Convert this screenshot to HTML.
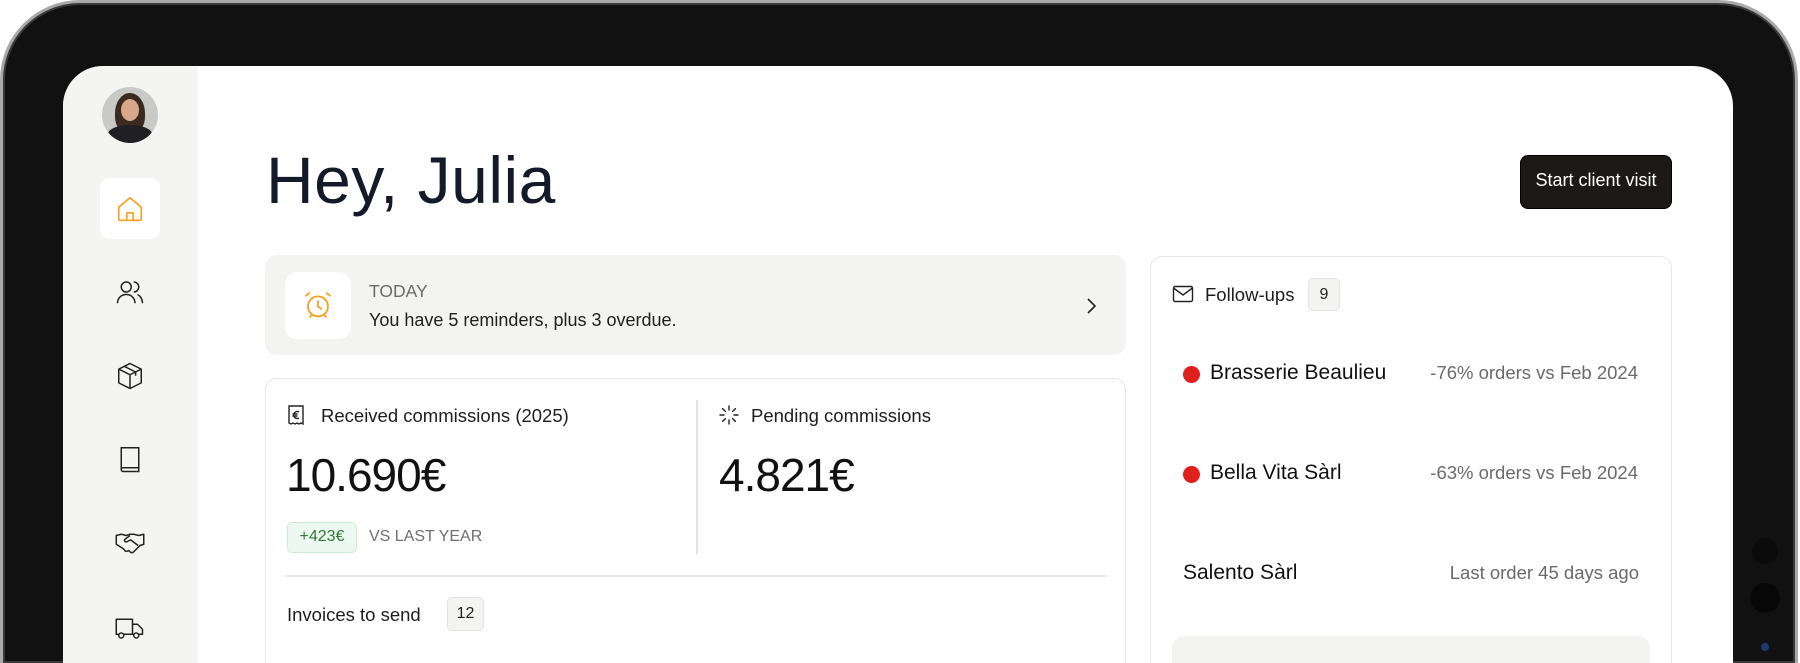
<!DOCTYPE html>
<html><head><meta charset="utf-8"><style>
*{margin:0;padding:0;box-sizing:border-box}
html,body{width:1800px;height:663px;overflow:hidden;background:#fff}
body{font-family:"Liberation Sans",sans-serif;position:relative}
#wrap{position:absolute;left:0;top:0;width:1800px;height:663px;overflow:hidden}
.abs{position:absolute}
.device{left:0;top:0;width:1798px;height:663px;border-radius:80px 80px 0 0;background:#111;border:3px solid #a9a9a9;border-bottom:none;box-shadow:inset 0 0 0 2px #3a3a3a}
.screen{left:63px;top:66px;width:1670px;height:597px;border-radius:40px 40px 0 0;background:#fff;overflow:hidden}
.side{left:0;top:0;width:135px;height:597px;background:#f4f4f3}
.t{position:absolute;white-space:nowrap}
svg{position:absolute;overflow:visible}
</style></head><body><div id="wrap">
<div class="abs device"></div>
<div class="abs" style="left:1752px;top:538px;width:26px;height:26px;border-radius:50%;background:#0b0b0b"></div>
<div class="abs" style="left:1750px;top:583px;width:30px;height:30px;border-radius:50%;background:#070707"></div>
<div class="abs" style="left:1761px;top:643px;width:8px;height:8px;border-radius:50%;background:#1d3b6e"></div>
<div class="abs screen">
 <div class="abs side"></div>
 <div class="abs" style="left:39px;top:21px;width:56px;height:56px;border-radius:50%;background:#c9c9c6;overflow:hidden">
  <div class="abs" style="left:13px;top:6px;width:30px;height:40px;border-radius:50% 50% 40% 40%;background:#3a2a22"></div>
  <div class="abs" style="left:19px;top:12px;width:18px;height:22px;border-radius:50%;background:#d9a88c"></div>
  <div class="abs" style="left:6px;top:38px;width:44px;height:18px;border-radius:50% 50% 0 0;background:#1f1f24"></div>
 </div>
 <div class="abs" style="left:37px;top:112px;width:60px;height:61px;border-radius:10px;background:#fff"></div>
 <svg width="30" height="30" style="left:52px;top:128px" viewBox="0 0 24 24" fill="none" stroke="#f5a01a" stroke-width="1.3" stroke-linejoin="round"><path d="M3 10.5 12 3l9 7.5V20a1 1 0 0 1-1 1H4a1 1 0 0 1-1-1z"/><path d="M9.5 21v-6h5v6"/></svg>
 <svg width="30" height="30" style="left:52px;top:211px" viewBox="0 0 24 24" fill="none" stroke="#222" stroke-width="1.2"><circle cx="9" cy="8" r="4"/><path d="M2 21c0-4 3-7 7-7s7 3 7 7"/><path d="M15 4a4 4 0 0 1 0 8M18 14c2 1 4 3.5 4 7"/></svg>
 <svg width="30" height="30" style="left:52px;top:295px" viewBox="0 0 24 24" fill="none" stroke="#222" stroke-width="1.2" stroke-linejoin="round"><path d="M12 2 21 6.5v11L12 22 3 17.5v-11z"/><path d="M3 6.5 12 11l9-4.5M12 11v11M7.5 4.3l9 4.5v3"/></svg>
 <svg width="30" height="30" style="left:52px;top:378px" viewBox="0 0 24 24" fill="none" stroke="#222" stroke-width="1.2"><path d="M5 3h14v16H6.5A1.5 1.5 0 0 0 5 20.5zM5 20.5A1.5 1.5 0 0 0 6.5 22H19v-3"/></svg>
 <svg width="32" height="30" style="left:51px;top:462px" viewBox="0 0 24 24" fill="none" stroke="#222" stroke-width="1.2" stroke-linejoin="round"><path d="M1 6l4-1 4 1 3-1 3 0 4 1 4-1v8l-3 1-5 5c-1 1-2 1-3 0l-1-1-1 .5c-1 .5-2 0-2.5-1l-1-1L1 13z"/><path d="M12 6 8 9c-1 1 0 2.5 1.5 2l3-1.5 6 4.5"/></svg>
 <svg width="32" height="30" style="left:51px;top:547px" viewBox="0 0 24 24" fill="none" stroke="#222" stroke-width="1.2" stroke-linejoin="round"><path d="M1 5h13v12H1zM14 9h4l4 4v4h-8"/><circle cx="5" cy="18" r="2" fill="#f4f4f3"/><circle cx="17" cy="18" r="2" fill="#fff"/></svg>

 <div class="t" style="left:203px;top:76px;font-size:66px;color:#151a2b;font-weight:500;letter-spacing:0.5px">Hey, Julia</div>
 <div class="abs" style="left:1457px;top:89px;width:152px;height:54px;border-radius:8px;background:#1c1917;border:1px solid #000"></div>
 <div class="t" style="left:1457px;top:104px;width:152px;text-align:center;font-size:18px;color:#fff">Start client visit</div>

 <div class="abs" style="left:202px;top:189px;width:861px;height:100px;border-radius:12px;background:#f3f3f2"></div>
 <div class="abs" style="left:222px;top:206px;width:66px;height:67px;border-radius:12px;background:#fff"></div>
 <svg width="32" height="32" style="left:239px;top:223px" viewBox="0 0 24 24" fill="none" stroke="#f5a01a" stroke-width="1.3" stroke-linecap="round"><circle cx="12" cy="13" r="7.5"/><path d="M12 9v4l2.5 2M3 5l2.5-2M21 5l-2.5-2M6 21l1.5-2M18 21l-1.5-2"/></svg>
 <div class="t" style="left:306px;top:215px;font-size:17.5px;color:#6b6b6b">TODAY</div>
 <div class="t" style="left:306px;top:244px;font-size:18px;color:#1e1e1e">You have 5 reminders, plus 3 overdue.</div>
 <svg width="14" height="20" style="left:1021px;top:230px" viewBox="0 0 14 20" fill="none" stroke="#222" stroke-width="1.6"><path d="M4 3l7 7-7 7"/></svg>

 <div class="abs" style="left:202px;top:312px;width:861px;height:300px;border-radius:12px;border:1.5px solid #e6e6e6"></div>
 <svg width="20" height="22" style="left:223px;top:338px" viewBox="0 0 20 22" fill="none" stroke="#222" stroke-width="1.4"><path d="M3 2h14v18l-2-1-2 1-2-1-2 1-2-1-2 1-2-1z"/><path d="M13 8a3.5 3.5 0 1 0 0 6M6.5 10h5M6.5 12h5"/></svg>
 <div class="t" style="left:258px;top:339px;font-size:18.5px;color:#1e1e1e">Received commissions (2025)</div>
 <div class="t" style="left:223px;top:382px;font-size:46px;color:#111;letter-spacing:-1px">10.690€</div>
 <div class="abs" style="left:224px;top:456px;width:70px;height:31px;border-radius:5px;background:#edf8f0;border:1px solid #cfe8d6"></div>
 <div class="t" style="left:224px;top:462px;width:70px;text-align:center;font-size:16px;color:#2f7a36">+423€</div>
 <div class="t" style="left:306px;top:462px;font-size:16px;color:#6f6f6f">VS LAST YEAR</div>
 <div class="abs" style="left:633px;top:334px;width:1.5px;height:154px;background:#e3e3e3"></div>
 <svg width="22" height="22" style="left:655px;top:338px" viewBox="0 0 22 22" fill="none" stroke="#222" stroke-width="1.4" stroke-linecap="round"><path d="M11 2v4M11 16v4M2 11h4M16 11h4M4.6 4.6l2.8 2.8M14.6 14.6l2.8 2.8M4.6 17.4l2.8-2.8M14.6 7.4l2.8-2.8"/></svg>
 <div class="t" style="left:688px;top:339px;font-size:18.5px;color:#1e1e1e">Pending commissions</div>
 <div class="t" style="left:656px;top:382px;font-size:46px;color:#111;letter-spacing:-1px">4.821€</div>
 <div class="abs" style="left:223px;top:509px;width:820px;height:1.5px;background:#e6e6e6"></div>
 <div class="t" style="left:224px;top:538px;font-size:18.5px;color:#1e1e1e">Invoices to send</div>
 <div class="abs" style="left:384px;top:531px;width:37px;height:34px;border-radius:5px;background:#f3f3f2;border:1px solid #e3e3e3"></div>
 <div class="t" style="left:384px;top:539px;width:37px;text-align:center;font-size:16px;color:#1e1e1e">12</div>

 <div class="abs" style="left:1087px;top:190px;width:522px;height:420px;border-radius:12px;border:1.5px solid #e6e6e6"></div>
 <svg width="22" height="18" style="left:1109px;top:219px" viewBox="0 0 22 18" fill="none" stroke="#222" stroke-width="1.4"><rect x="1.5" y="1.5" width="19" height="15" rx="1.5"/><path d="M1.5 3l9.5 7 9.5-7"/></svg>
 <div class="t" style="left:1142px;top:218px;font-size:18.5px;color:#1e1e1e">Follow-ups</div>
 <div class="abs" style="left:1245px;top:212px;width:32px;height:33px;border-radius:5px;background:#f3f3f2;border:1px solid #e3e3e3"></div>
 <div class="t" style="left:1245px;top:220px;width:32px;text-align:center;font-size:16px;color:#1e1e1e">9</div>

 <div class="abs" style="left:1120px;top:300px;width:17px;height:17px;border-radius:50%;background:#e0201f"></div>
 <div class="t" style="left:1147px;top:295px;font-size:21px;color:#111">Brasserie Beaulieu</div>
 <div class="t" style="left:1300px;top:296px;width:275px;text-align:right;font-size:18.5px;color:#6a6a6a">-76% orders vs Feb 2024</div>
 <div class="abs" style="left:1120px;top:400px;width:17px;height:17px;border-radius:50%;background:#e0201f"></div>
 <div class="t" style="left:1147px;top:395px;font-size:21px;color:#111">Bella Vita Sàrl</div>
 <div class="t" style="left:1300px;top:396px;width:275px;text-align:right;font-size:18.5px;color:#6a6a6a">-63% orders vs Feb 2024</div>
 <div class="t" style="left:1120px;top:495px;font-size:21px;color:#111">Salento Sàrl</div>
 <div class="t" style="left:1300px;top:496px;width:276px;text-align:right;font-size:18.5px;color:#6a6a6a">Last order 45 days ago</div>
 <div class="abs" style="left:1109px;top:570px;width:478px;height:27px;border-radius:12px 12px 0 0;background:#f3f3f2"></div>
</div>
</div></body></html>
